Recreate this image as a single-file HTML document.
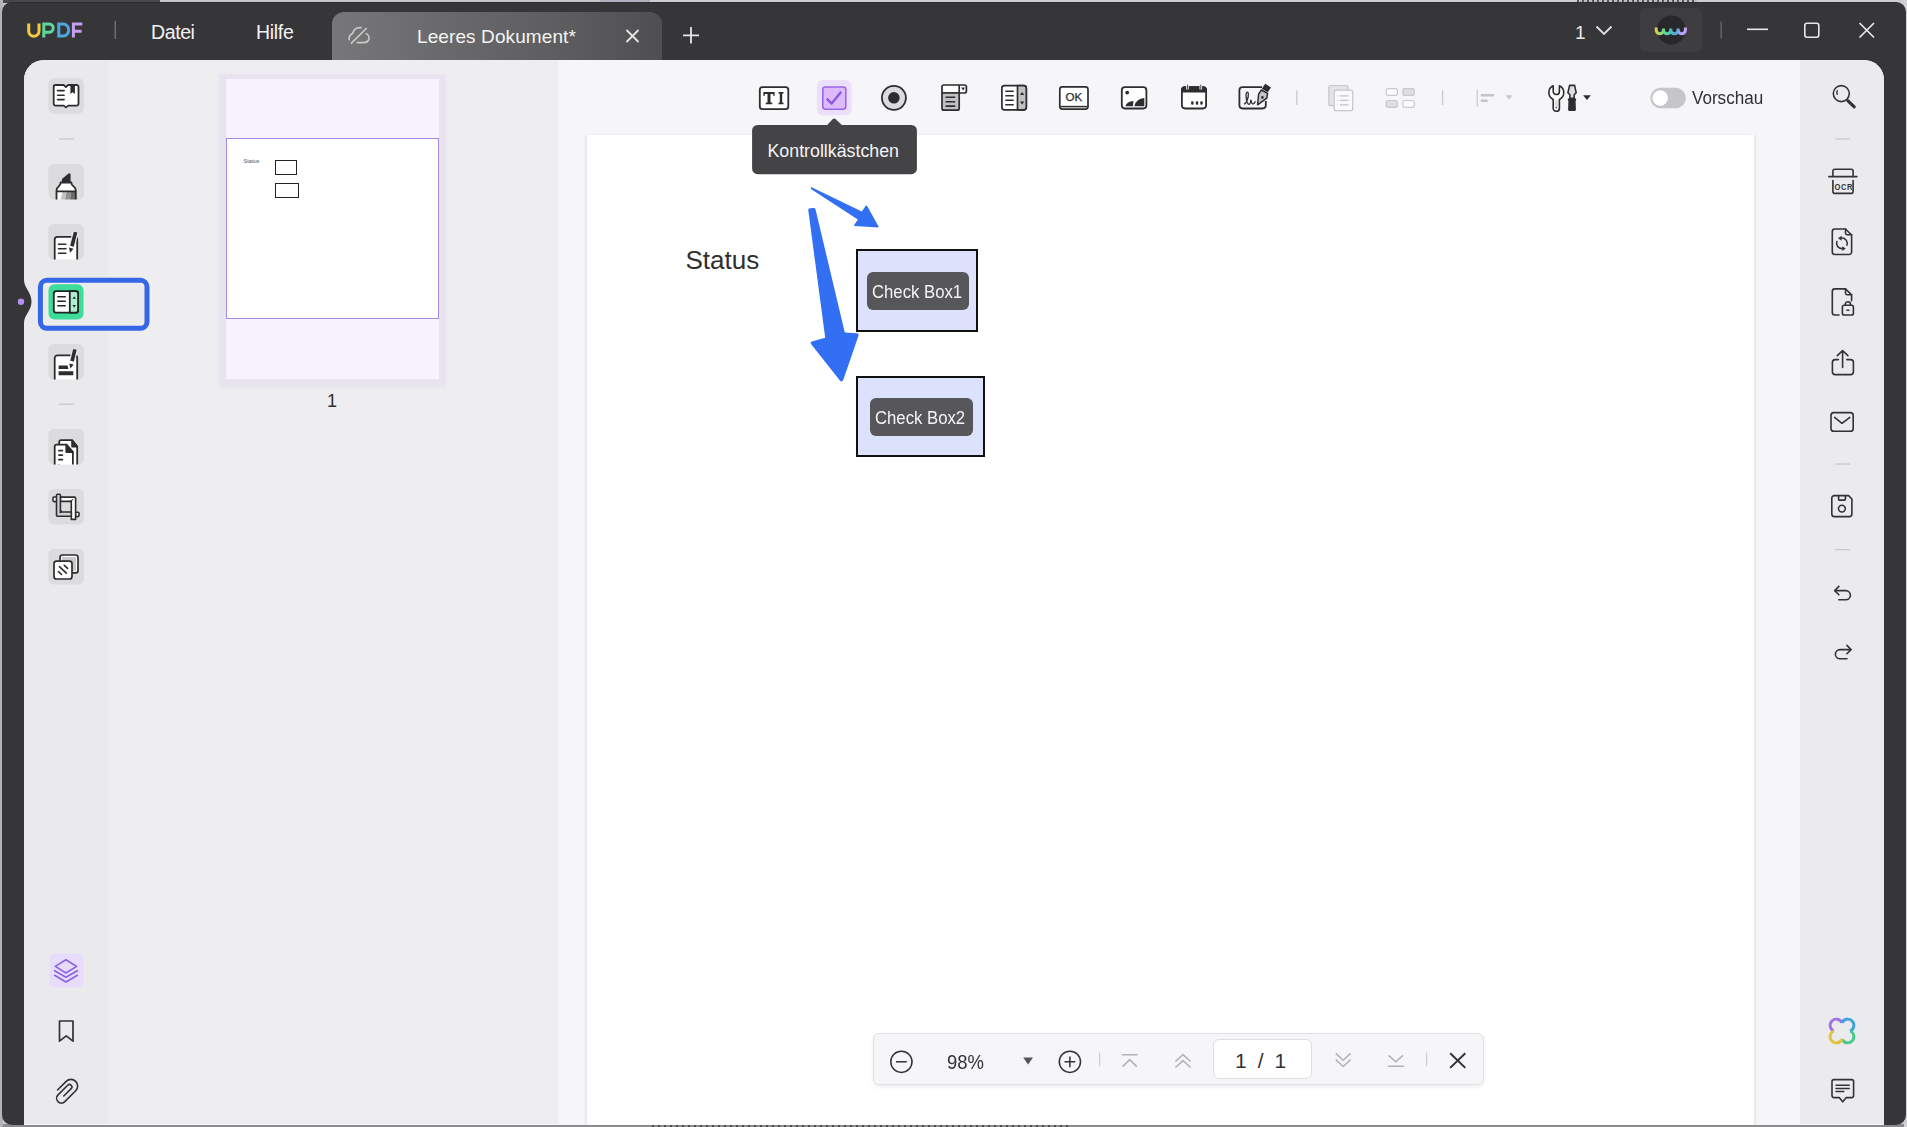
<!DOCTYPE html>
<html><head><meta charset="utf-8">
<style>
*{margin:0;padding:0;box-sizing:border-box}
html,body{width:1907px;height:1127px;overflow:hidden;background:#c9c7cf;font-family:"Liberation Sans",sans-serif}
.a{position:absolute}
#deskL{left:0;top:0;width:160px;height:3px;background:#474749}
#deskT{left:160px;top:0;width:1747px;height:3px;background:linear-gradient(90deg,#c4c4c6 0,#c4c4c6 440px,#b2aebe 440px,#b2aebe 490px,#cdcdcf 490px)}
#deskTx{left:1577px;top:0;width:120px;height:2px;background:repeating-linear-gradient(90deg,#555 0 2px,#bdbdbf 2px 5px)}
#deskB{left:0;top:1124px;width:1907px;height:3px;background:#8b8b8d}
#deskLe{left:0;top:0;width:3px;height:1127px;background:#b4b4b6}
#deskR{left:1904px;top:0;width:3px;height:1127px;background:#d2d2d4}
#win{left:2px;top:2px;width:1904px;height:1123px;background:#363538;border-radius:10px;border-top:1.5px solid #2f2d35}
#content{left:24px;top:60px;width:1860px;height:1065px;background:#f6f5f8;border-radius:20px 20px 0 0;overflow:hidden}
#lside{left:0;top:0;width:84px;height:1064px;background:#eaeaec}
#thumbs{left:84px;top:0;width:450px;height:1064px;background:#eeedf0}
#rside{left:1776px;top:0;width:84px;height:1064px;background:#ebeaec}
#page{left:563px;top:75px;width:1167px;height:1000px;background:#fff;box-shadow:-2px 0 2px rgba(0,0,0,0.06),2px 0 2px rgba(0,0,0,0.05)}
.t{position:absolute;white-space:nowrap;line-height:1}
</style></head><body>
<div id="deskL" class="a"></div><div id="deskT" class="a"></div><div id="deskB" class="a"></div><div id="deskLe" class="a"></div><div id="deskR" class="a"></div><div id="deskTx" class="a"></div>
<div id="win" class="a"></div>

<!-- title bar -->
<svg class="a" style="left:0;top:0" width="120" height="60">
  <g fill="none" stroke-width="3" stroke-linecap="butt">
    <path d="M28.7 23.4 V31 A5.15 5.15 0 0 0 39 31 V23.4" stroke="#f4cb3c"/>
    <path d="M43.8 37.4 V23.9 H49 A4.2 4.2 0 0 1 49 32.3 H43.8" stroke="#5bd79d"/>
    <path d="M58.8 23.9 V35.9 H63.2 A5.5 6 0 0 0 63.2 23.9 Z" stroke="#4aa8dd"/>
    <path d="M73.4 37.4 V23.9 H82.3 M73.4 31.2 H81.6" stroke="#c69ff4"/>
  </g>
  <rect x="114.5" y="21" width="1.5" height="18" fill="#6d6d70"/>
</svg>
<div class="t" style="left:151px;top:23px;font-size:19.5px;color:#f2f2f2;letter-spacing:-0.4px">Datei</div>
<div class="t" style="left:256px;top:23px;font-size:19.5px;color:#f2f2f2;letter-spacing:-0.3px">Hilfe</div>
<div class="a" style="left:332px;top:12px;width:330px;height:48px;border-radius:12px 12px 0 0;background:linear-gradient(90deg,#777779 0%,#6b6b6d 30%,#5d5d5f 70%,#4f4f51 100%)"></div>
<svg class="a" style="left:332px;top:12px" width="380" height="48">
  <g fill="none" stroke="#c9c9c9" stroke-width="1.7" stroke-linecap="round">
    <path d="M19.4 31.1 L34.3 16.5"/>
    <path d="M29 15.6 C25 15.2 21.6 17.5 20.5 21.5 C18.5 22.5 16.8 24.5 17.2 27.7"/>
    <path d="M34.3 21.8 C36.6 22.8 37.5 25.4 36.8 27.6 C36 29.4 34.5 30.6 32 30.6 H25.3"/>
  </g>
  <path d="M294.5 18 L306.5 30 M306.5 18 L294.5 30" stroke="#e6e6e6" stroke-width="1.8" fill="none"/>
  <path d="M359 15 V31.5 M351 23.3 H367" stroke="#e6e6e6" stroke-width="1.8" fill="none"/>
</svg>
<div class="t" style="left:417px;top:26.8px;font-size:19px;color:#f4f4f4;letter-spacing:0.1px">Leeres Dokument*</div>
<div class="t" style="left:1575px;top:23px;font-size:19px;color:#e8e8e8">1</div>
<svg class="a" style="left:1590px;top:0" width="317" height="60">
  <path d="M6.5 26.5 L14 34 L21.5 26.5" stroke="#e0e0e0" stroke-width="1.8" fill="none"/>
  <rect x="50" y="8" width="62" height="44" rx="6" fill="#3e3d40"/>
  <circle cx="81.3" cy="30" r="14.4" fill="#28272a"/>
  <defs><linearGradient id="wg" x1="64" x2="98" y1="0" y2="0" gradientUnits="userSpaceOnUse"><stop offset="0" stop-color="#f7c843"/><stop offset="0.33" stop-color="#55d994"/><stop offset="0.62" stop-color="#49a9dc"/><stop offset="0.8" stop-color="#b89cf6"/><stop offset="1" stop-color="#c7a2f5"/></linearGradient></defs>
  <path d="M66.2 27.5 V30 A3.65 3.65 0 0 0 73.5 30 V28.5 M73.5 30 A3.65 3.65 0 0 0 80.8 30 V28.5 M80.8 30 A3.65 3.65 0 0 0 88.1 30 V28.5 M88.1 30 A3.65 3.65 0 0 0 95.4 30 V27.5" stroke="url(#wg)" stroke-width="3" fill="none"/>
  <rect x="130.5" y="21.5" width="1.3" height="17" fill="#6a6a6c"/>
  <rect x="157" y="28.5" width="21" height="1.6" fill="#e8e8e8"/>
  <rect x="214.8" y="23.2" width="14" height="14" rx="2.2" stroke="#e8e8e8" stroke-width="1.6" fill="none"/>
  <path d="M269.5 23 L284 37.5 M284 23 L269.5 37.5" stroke="#e8e8e8" stroke-width="1.7" fill="none"/>
</svg>
<div id="content" class="a">
  <div id="lside" class="a"></div>
  <div id="thumbs" class="a"></div>
  <div id="page" class="a"></div>
  <div id="rside" class="a"></div>
</div>

<!-- left notch -->
<svg class="a" style="left:0;top:0" width="1907" height="1127">
  <path d="M24 280 C24 288 31.5 292 31.5 301.5 C31.5 311 24 315 24 323 Z" fill="#363538"/>
  <circle cx="21" cy="301.8" r="3.2" fill="#b58ff1"/>
  <!-- left sidebar icon backgrounds -->
  <g fill="#dcdcde">
    <rect x="48.3" y="78.3" width="35.7" height="35.4" rx="5.5"/>
    <rect x="48.3" y="164" width="35.7" height="35.5" rx="5.5"/>
    <rect x="48.3" y="224" width="35.7" height="35.5" rx="5.5"/>
    <rect x="48.3" y="344" width="35.7" height="35.5" rx="5.5"/>
    <rect x="48.3" y="429" width="35.7" height="35.5" rx="5.5"/>
    <rect x="48.3" y="489" width="35.7" height="35.5" rx="5.5"/>
    <rect x="48.3" y="549" width="35.7" height="35.5" rx="5.5"/>
  </g>
  <rect x="59" y="138.3" width="15" height="1.3" fill="#c9c9cc"/>
  <rect x="59" y="403.5" width="15" height="1.3" fill="#c9c9cc"/>
  <!-- selected -->
  <rect x="40.4" y="280.3" width="106.6" height="48" rx="6.5" fill="#ecebed" stroke="#3567e6" stroke-width="5"/>
  <rect x="48.5" y="284.3" width="35" height="35.2" rx="6" fill="#3ddc9a"/>
  <g stroke="#1f2622" stroke-width="1.8" stroke-linejoin="round">
    <rect x="53.8" y="291.1" width="24.3" height="21.6" rx="2.5" fill="#fff"/>
    <path d="M69.8 291.1 H75.6 A2.5 2.5 0 0 1 78.1 293.6 V310.2 A2.5 2.5 0 0 1 75.6 312.7 H69.8 Z" fill="#aeeecf"/>
  </g>
  <path d="M57.3 296.8 H65.8 M57.3 301.3 H65.8 M57.3 305.7 H65.8" stroke="#1f2622" stroke-width="1.5"/>
  <path d="M72.4 298.8 L74.2 296.4 L76 298.8 Z M72.4 305 L74.2 307.5 L76 305 Z" fill="#1f2622"/>
  <g fill="none" stroke="#2d2d2f" stroke-width="1.8" stroke-linejoin="round" stroke-linecap="round">
    <!-- book -->
    <path d="M55.5 85 H63.6 L65.9 87 L68.2 85 H76.7 A1.8 1.8 0 0 1 78.5 86.8 V103.8 A1.8 1.8 0 0 1 76.7 105.6 H68.2 L65.9 107.4 L63.6 105.6 H55.5 A1.8 1.8 0 0 1 53.7 103.8 V86.8 A1.8 1.8 0 0 1 55.5 85 Z" fill="#fff"/>
    <path d="M57.6 90.6 H64.1 M57.6 95.3 H64.1 M57.6 99.6 H64.1" stroke-width="1.6"/>
  </g>
  <path d="M70.4 85 H74.9 V94 L72.65 92.2 L70.4 94 Z" fill="#2d2d2f"/>
  <!-- highlighter -->
  <path d="M61.8 180.2 Q61.8 179 62.8 178.3 L68.6 173.6 Q70.6 172.6 70.6 175 V182.5 H61.8 Z" fill="#2d2d2f"/>
  <path d="M56.5 199.5 V190.5 Q56.5 188.6 58 187.2 L59.8 185 Q60.6 184 60.6 182.5 H71.4 Q71.4 184 72.2 185 L74.3 187.2 Q75.8 188.6 75.8 190.5 V199.5 Z" fill="#fff"/>
  <path d="M60.6 199.5 L62.5 192 H66.5 L65 199.5 Z" fill="#c4c4c4"/>
  <path d="M65 199.5 L66.5 192 H71 L70 199.5 Z" fill="#929292"/>
  <path d="M70 199.5 L71 192 H75.5 V199.5 Z" fill="#6a6a6a"/>
  <path d="M56.5 199.5 V190.5 Q56.5 188.6 58 187.2 L59.8 185 Q60.6 184 60.6 182.5 H71.4 Q71.4 184 72.2 185 L74.3 187.2 Q75.8 188.6 75.8 190.5 V199.5 M56.5 191.4 H75.8" fill="none" stroke="#2d2d2f" stroke-width="1.8" stroke-linejoin="round"/>
  <!-- edit doc -->
  <path d="M54.7 259.5 V239.5 A2.7 2.7 0 0 1 57.4 236.8 H74.5 A2.7 2.7 0 0 1 77.2 239.5 V259.5" fill="#fff" stroke="#2d2d2f" stroke-width="1.8"/>
  <path d="M58.5 244.3 H65.9 M58.5 248.7 H65.9 M58.5 253.2 H65.9" stroke="#2d2d2f" stroke-width="1.6" stroke-linecap="round"/>
  <path d="M75.6 232.1 L71.9 246.2" stroke="#eaeaec" stroke-width="6"/>
  <path d="M75.6 232.1 L71.9 246.2" stroke="#2d2d2f" stroke-width="3.6"/>
  <path d="M69 247.5 L73.5 248.7 L70 252.8 Z" fill="#2d2d2f"/>
  <!-- redact doc -->
  <path d="M54.7 379.5 V358 A2.7 2.7 0 0 1 57.4 355.3 H74.5 A2.7 2.7 0 0 1 77.2 358 V379.5" fill="#fff" stroke="#2d2d2f" stroke-width="1.8"/>
  <path d="M74.9 349.4 L72.1 361.1" stroke="#eaeaec" stroke-width="6"/>
  <path d="M74.9 349.4 L72.1 361.1" stroke="#2d2d2f" stroke-width="3.6"/>
  <path d="M69.2 363.4 L73.7 364.4 L70.4 368.5 Z" fill="#2d2d2f"/>
  <path d="M58.6 365.4 H67.6 L68.4 368.9 H58.6 Z M58.6 371.3 H73.3 V375.2 H58.6 Z" fill="#2d2d2f"/>
  <!-- organize pages -->
  <g stroke="#2d2d2f" stroke-width="1.8" stroke-linejoin="round">
    <path d="M59.2 464.5 V441.9 A1.7 1.7 0 0 1 60.9 440.2 H72.1 L77.2 446.5 V464.5" fill="#fff"/>
    <path d="M72.1 440.2 V446.5 H77.2 Z" fill="#2d2d2f"/>
    <path d="M54.7 464.5 V446.4 A1.7 1.7 0 0 1 56.4 444.7 H66.3 L72.9 452.1 V464.5" fill="#fff"/>
    <path d="M66.3 444.7 V452.1 H72.9 Z" fill="#2d2d2f"/>
  </g>
  <path d="M58.8 450.6 H62.5 M58.8 455.1 H62.5 M58.8 459.6 H62.5" stroke="#2d2d2f" stroke-width="1.6" stroke-linecap="round"/>
  <!-- crop -->
  <g stroke="#2d2d2f" stroke-width="1.6" stroke-linejoin="round">
    <rect x="53" y="497" width="4" height="4.6" rx="1" fill="#fff"/>
    <rect x="75.4" y="512.2" width="3.6" height="4.4" rx="1" fill="#fff"/>
    <path d="M60.4 497.1 H74.6 A1 1 0 0 1 75.6 498.1 V519.4 H71.3 V501.4 H60.4 Z" fill="#fff"/>
    <path d="M57.5 494.2 H59.4 A1 1 0 0 1 60.4 495.2 V512 H71.3 V516.3 H57.5 A1 1 0 0 1 56.5 515.3 V495.2 A1 1 0 0 1 57.5 494.2 Z" fill="#d2d2d4"/>
  </g>
  <path d="M59.8 513 L62 510.7 M70 501.9 L72.9 499.4" stroke="#2d2d2f" stroke-width="1.2"/>
  <!-- compress -->
  <g stroke="#2d2d2f" stroke-width="1.7">
    <rect x="60" y="555" width="18" height="17.9" rx="2.5" fill="#fff"/>
    <rect x="62" y="557" width="14" height="13.9" fill="#c9c9cb" stroke="none"/>
    <rect x="54" y="561.2" width="18" height="17.8" rx="2.5" fill="#fff"/>
  </g>
  <path d="M59.4 566.7 L66.3 573.1 M64.3 565.3 L67.6 568.4 M58.5 571.6 L61.6 574.5" stroke="#2d2d2f" stroke-width="1.6" stroke-linecap="round"/>
  <!-- layers -->
  <rect x="49.5" y="953.5" width="34" height="34" rx="5.5" fill="#e7dcfb"/>
  <g fill="none" stroke="#8b62e2" stroke-width="1.6" stroke-linejoin="round" stroke-linecap="round">
    <path d="M65.9 959.7 L76.6 966.4 L65.9 973 L55.3 966.4 Z"/>
    <path d="M54.6 970.7 L65.9 977.3 L77.4 970.7 M54.6 975.3 L65.9 982 L77.4 975.3"/>
  </g>
  <!-- bookmark -->
  <path d="M59.5 1021 H73 V1041.2 L66.2 1035.8 L59.5 1041.2 Z" fill="none" stroke="#333335" stroke-width="1.7" stroke-linejoin="round"/>
  <!-- paperclip -->
  <g transform="translate(66.5 1091.5) rotate(45)">
    <path d="M-7.4 5.3 V-7 A6.7 6.7 0 0 1 6 -7 V8.4 A4.8 4.8 0 0 1 -3.6 8.4 V-5.3 A2.45 2.45 0 0 1 1.3 -5.3 V5.1" fill="none" stroke="#333335" stroke-width="1.6" stroke-linecap="round"/>
  </g>
</svg>

<!-- thumbnail -->
<div class="a" style="left:219px;top:74px;width:227px;height:314px;background:#e7e3ef;border-radius:3px;filter:blur(0.8px)"></div>
<div class="a" style="left:226.4px;top:78.7px;width:212.3px;height:300.5px;background:#f8f2fc"></div>
<div class="a" style="left:226px;top:138.3px;width:213px;height:180.6px;background:#fff;border:1.2px solid #a58be2"></div>
<div class="t" style="left:243.5px;top:159.3px;font-size:5.6px;color:#555">Status</div>
<div class="a" style="left:274.6px;top:160.2px;width:22.8px;height:15px;border:1.2px solid #222"></div>
<div class="a" style="left:274.6px;top:183.2px;width:24.2px;height:14.6px;border:1.2px solid #222"></div>
<div class="t" style="left:327px;top:392px;font-size:18px;color:#2f2f31">1</div>

<!-- toolbar -->
<svg class="a" style="left:0;top:0" width="1907" height="1127">
  <!-- TI -->
  <rect x="759.8" y="87.1" width="28.5" height="22" rx="2.6" fill="#fff" stroke="#2d2d2f" stroke-width="1.8"/>
  <path d="M763.4 92 H774.6 V96 H773.6 L773 93.9 H770.5 V102.4 L772.3 102.7 V104.2 H765.7 V102.7 L767.5 102.4 V93.9 H765 L764.4 96 H763.4 Z M778.5 92 H783.5 V93.5 L782.2 93.8 V102.4 L783.5 102.7 V104.2 H778.5 V102.7 L779.8 102.4 V93.8 L778.5 93.5 Z" fill="#2d2d2f"/>
  <!-- checkbox -->
  <rect x="816.8" y="80" width="34.8" height="35.2" rx="6" fill="#ecdffc"/>
  <rect x="822.8" y="87" width="23" height="22.2" rx="2.6" fill="#dcbafb" stroke="#9b67e9" stroke-width="1.6"/>
  <path d="M826.8 98.6 L831.6 103.6 L841.2 91.8" fill="none" stroke="#8e56e6" stroke-width="2.4" stroke-linejoin="round"/>
  <!-- radio -->
  <circle cx="893.9" cy="97.8" r="12" fill="#dcdcde" stroke="#2d2d2f" stroke-width="1.8"/>
  <circle cx="893.9" cy="97.8" r="5.8" fill="#2d2d2f"/>
  <!-- combo -->
  <g stroke="#2d2d2f" stroke-width="1.7" stroke-linejoin="round">
    <path d="M942 93 V86.8 A1.8 1.8 0 0 1 943.8 85 H964.4 A2 2 0 0 1 966.4 87 V91 A2 2 0 0 1 964.4 93 Z" fill="#fff"/>
    <path d="M942 93 H959.2 V108.2 A2 2 0 0 1 957.2 110.2 H944 A2 2 0 0 1 942 108.2 Z" fill="#c1c1c3"/>
    <path d="M959.2 85 V93" fill="none"/>
  </g>
  <path d="M961.2 87.6 H965 L963.1 90.6 Z" fill="#2d2d2f"/>
  <path d="M945.5 97.3 H955.2 M945.5 101.7 H955.2 M945.5 106.1 H955.2" stroke="#2d2d2f" stroke-width="1.6"/>
  <!-- listbox -->
  <g stroke="#2d2d2f" stroke-width="1.7" stroke-linejoin="round">
    <rect x="1001.9" y="85.7" width="24.4" height="24.2" rx="2.6" fill="#fff"/>
    <path d="M1017.5 85.7 H1023.7 A2.6 2.6 0 0 1 1026.3 88.3 V107.3 A2.6 2.6 0 0 1 1023.7 109.9 H1017.5 Z" fill="#c1c1c3"/>
  </g>
  <path d="M1005.3 91.2 H1013.7 M1005.3 95.7 H1013.7 M1005.3 100.2 H1013.7 M1005.3 104.8 H1013.7" stroke="#2d2d2f" stroke-width="1.5"/>
  <path d="M1019.9 95 L1022.1 92 L1024.3 95 Z M1019.9 101.4 L1022.1 104.4 L1024.3 101.4 Z" fill="#2d2d2f"/>
  <!-- OK -->
  <rect x="1059.8" y="86.8" width="28.2" height="22.3" rx="2.6" fill="#fff" stroke="#2d2d2f" stroke-width="1.7"/>
  <path d="M1060.5 106.6 H1087.3" stroke="#2d2d2f" stroke-width="1.5"/>
  <text x="1065.6" y="100.8" font-family="Liberation Sans" font-size="11.6" fill="#2d2d2f" stroke="#2d2d2f" stroke-width="0.25">OK</text>
  <!-- image -->
  <rect x="1121.8" y="87.1" width="24.6" height="21.4" rx="3.2" fill="#fff" stroke="#2d2d2f" stroke-width="1.8"/>
  <circle cx="1127.2" cy="92.6" r="1.9" fill="#2d2d2f"/>
  <path d="M1125.3 106.3 Q1127 101.6 1133.5 101.1 L1132.9 106.3 Z M1134.3 106.3 Q1136 98.8 1144.3 98.1 V106.3 Z" fill="#2d2d2f"/>
  <!-- calendar -->
  <rect x="1181.9" y="87.1" width="24.2" height="21.4" rx="3.2" fill="#fff" stroke="#2d2d2f" stroke-width="1.8"/>
  <path d="M1181.9 91.6 V90.3 A3.2 3.2 0 0 1 1185.1 87.1 H1202.9 A3.2 3.2 0 0 1 1206.1 90.3 V91.6 Z" fill="#2d2d2f" stroke="#2d2d2f" stroke-width="1.8"/>
  <path d="M1187.4 84.4 V89.6 M1200.8 84.4 V89.6" stroke="#fff" stroke-width="2.6"/>
  <path d="M1187.4 84.6 V89.4 M1200.8 84.6 V89.4" stroke="#2d2d2f" stroke-width="0.9"/>
  <rect x="1191.1" y="101.2" width="2.4" height="3.6" rx="1" fill="#2d2d2f"/>
  <rect x="1195.8" y="101.2" width="2.4" height="3.6" rx="1" fill="#2d2d2f"/>
  <rect x="1200.3" y="101.2" width="2.4" height="3.6" rx="1" fill="#2d2d2f"/>
  <!-- signature -->
  <path d="M1262 87.1 H1242.6 A3.2 3.2 0 0 0 1239.4 90.3 V105.3 A3.2 3.2 0 0 0 1242.6 108.5 H1262.6 A3.2 3.2 0 0 0 1265.8 105.3 V101" fill="none" stroke="#2d2d2f" stroke-width="1.8"/>
  <path d="M1244 104.2 C1247 103.5 1248.6 97 1248.3 93.5 C1248 91 1245.8 92 1246 96 C1246.3 100 1247.5 104 1249 104.4 C1250.3 104.6 1250.8 100.5 1251 99.8 C1251.2 102.5 1252 104.3 1253.5 103.8 C1254.5 103.4 1255 101.5 1255.5 101.2" fill="none" stroke="#2d2d2f" stroke-width="1.3"/>
  <path d="M1265.2 83.8 L1271 87.4 L1267.8 92.2 L1261.8 88.8 Z" fill="#2d2d2f"/>
  <path d="M1261.4 90 L1267.6 93.4 L1266.8 98.2 L1257.6 104.8 L1258.6 94.2 Z" fill="#c4c4c6" stroke="#2d2d2f" stroke-width="1.5" stroke-linejoin="round"/>
  <circle cx="1262.4" cy="97.4" r="1.3" fill="#2d2d2f"/>
  <!-- separators -->
  <rect x="1296.2" y="90.3" width="1.3" height="14.6" fill="#c9c8cd"/>
  <rect x="1441.9" y="90.3" width="1.3" height="14.6" fill="#c9c8cd"/>
  <!-- copy list disabled -->
  <rect x="1328.8" y="85.5" width="19.3" height="20.2" rx="2" fill="#e4e3e8" stroke="#c7c6cb" stroke-width="1.2"/>
  <rect x="1334.2" y="90.2" width="18.5" height="20.5" rx="2" fill="#fafafc" stroke="#c7c6cb" stroke-width="1.2"/>
  <path d="M1340 95.8 H1348.5 M1340 100.4 H1348.5 M1340 104.8 H1348.5" stroke="#c2c1c6" stroke-width="1.3"/>
  <path d="M1337.3 95.8 H1338 M1337.3 100.4 H1338 M1337.3 104.8 H1338" stroke="#c2c1c6" stroke-width="1.3"/>
  <!-- grid disabled -->
  <g stroke="#c9c8cd" stroke-width="1.2">
    <rect x="1386.2" y="88.6" width="11.2" height="6.8" rx="2" fill="#fcfcfd"/>
    <rect x="1402.8" y="88.6" width="11.5" height="6.8" rx="2" fill="#dedde2"/>
    <rect x="1386.2" y="100.5" width="11.2" height="6.8" rx="2" fill="#dedde2"/>
    <rect x="1402.8" y="100.5" width="11.5" height="6.8" rx="2" fill="#fcfcfd"/>
  </g>
  <!-- align disabled -->
  <rect x="1476.6" y="89.8" width="1.4" height="17.1" fill="#d0cfd4"/>
  <path d="M1480.8 95.2 H1494 M1480.8 100.7 H1487.6" stroke="#c6c5ca" stroke-width="2.4"/>
  <path d="M1505.4 95.2 H1512.8 L1509.1 99.6 Z" fill="#cacace"/>
  <!-- tools -->
  <path d="M1553.2 85.8 A7.5 7.5 0 0 0 1553.2 99.4 V108.2 A3.1 3.1 0 0 0 1559.4 108.2 V99.4 A7.5 7.5 0 0 0 1559.4 85.8 V91.4 A3.1 3.1 0 0 1 1553.2 91.4 Z" fill="#fff" stroke="#2d2d2f" stroke-width="1.6" stroke-linejoin="round"/>
  <path d="M1554.6 100.4 H1558 V107.5 H1554.6 Z" fill="#dedee0"/>
  <circle cx="1556.3" cy="107.8" r="0.7" fill="#2d2d2f"/>
  <path d="M1569.6 85.4 H1574.6 L1576.2 92.8 L1574.2 94.8 V98.4 H1569.9 V94.8 L1567.9 92.8 Z" fill="#dedee0" stroke="#2d2d2f" stroke-width="1.6" stroke-linejoin="round"/>
  <path d="M1567.9 98.4 H1576.1 V100.3 L1575.6 101 L1575.9 109.5 Q1575.9 111 1574.4 111 H1569.6 Q1568.1 111 1568.1 109.5 L1568.4 101 L1567.9 100.3 Z" fill="#2d2d2f"/>
  <path d="M1583.1 95.3 H1590.8 L1587 100.1 Z" fill="#2d2d2f"/>
  <!-- toggle -->
  <rect x="1650.3" y="87.7" width="35.6" height="20.6" rx="10.3" fill="#c6c5c9"/>
  <circle cx="1660.2" cy="98" r="7.7" fill="#fff"/>
</svg>
<div class="t" style="left:1692px;top:89px;font-size:18px;color:#303032;transform:scaleX(0.948);transform-origin:0 0">Vorschau</div>

<!-- page content -->
<div class="t" style="left:685.5px;top:247.3px;font-size:26px;color:#2f2f2f">Status</div>
<div class="a" style="left:856.4px;top:249px;width:121.6px;height:82.6px;background:#dde2fc;border:2.2px solid #111"></div>
<div class="a" style="left:867px;top:272px;width:101.8px;height:37.7px;background:#57575b;border-radius:6px"></div>
<div class="t" style="left:872.3px;top:283.5px;font-size:17.6px;color:#f4f4f4;transform:scaleX(0.95);transform-origin:0 0">Check Box1</div>
<div class="a" style="left:856.4px;top:376.3px;width:128.9px;height:81.2px;background:#dde2fc;border:2.2px solid #111"></div>
<div class="a" style="left:869.5px;top:398px;width:103.2px;height:37.6px;background:#57575b;border-radius:6px"></div>
<div class="t" style="left:875.3px;top:409.8px;font-size:17.6px;color:#f4f4f4;transform:scaleX(0.95);transform-origin:0 0">Check Box2</div>
<svg class="a" style="left:0;top:0" width="1907" height="1127">
  <path d="M811.1 187.1 L861.8 211.5 L865.7 205.8 Q866.5 205 867.2 206 L878.7 226.8 Q878.8 227.6 878 227.6 L854.6 226 Q853.6 225.6 854.2 224.9 L857.8 219.6 L811.3 189.2 Q810.3 188 811.1 187.1 Z" fill="#336ff2"/>
  <path d="M808.3 210.2 Q808 208.4 809.8 208.2 L813.6 207.9 Q815.2 207.8 815.5 209.3 L844.8 332.4 L856.6 333.2 Q859.2 333.6 858.4 336 L843.4 379.6 Q841.5 383.5 839.3 379.8 L811.2 344.2 Q809.6 341.6 812.6 341.2 L825.2 337.8 Z" fill="#336ff2"/>
</svg>
<!-- tooltip -->
<svg class="a" style="left:0;top:0" width="1907" height="1127">
  <path d="M757.6 124.9 H827.2 L832.6 119.3 Q834.2 117.8 835.8 119.3 L841.8 124.9 H911.4 A5.5 5.5 0 0 1 916.9 130.4 V168.7 A5.5 5.5 0 0 1 911.4 174.2 H757.6 A5.5 5.5 0 0 1 752.1 168.7 V130.4 A5.5 5.5 0 0 1 757.6 124.9 Z" fill="#444346"/>
</svg>
<div class="t" style="left:767.5px;top:143px;font-size:17.8px;color:#f5f5f5">Kontrollkästchen</div>

<!-- right sidebar icons -->
<svg class="a" style="left:0;top:0" width="1907" height="1127">
  <g fill="none" stroke="#333335" stroke-width="1.6" stroke-linecap="round" stroke-linejoin="round">
    <circle cx="1841.3" cy="93.6" r="8"/>
    <path d="M1837.2 90.6 Q1836.6 92.6 1837.2 94.4" stroke-width="1.4"/>
  </g>
  <path d="M1847.8 100.6 L1854.2 106.8" stroke="#333335" stroke-width="3.2" stroke-linecap="round"/>
  <rect x="1835.2" y="138.3" width="14.8" height="1.3" fill="#c9c9cc"/>
  <rect x="1835.2" y="463.4" width="14.8" height="1.3" fill="#c9c9cc"/>
  <rect x="1835.2" y="549" width="14.8" height="1.3" fill="#c9c9cc"/>
  <g fill="none" stroke="#333335" stroke-width="1.6" stroke-linecap="round" stroke-linejoin="round">
    <!-- OCR -->
    <path d="M1832.9 176.5 V171.2 A2 2 0 0 1 1834.9 169.2 H1851.1 A2 2 0 0 1 1853.1 171.2 V176.5"/>
    <path d="M1828.8 176.6 H1856.9"/>
    <path d="M1832.9 180.5 V191.4 A2 2 0 0 0 1834.9 193.4 H1851.1 A2 2 0 0 0 1853.1 191.4 V180.5"/>
    <!-- convert -->
    <path d="M1845.5 229 H1834.8 A2.5 2.5 0 0 0 1832.3 231.5 V252 A2.5 2.5 0 0 0 1834.8 254.5 H1849.1 A2.5 2.5 0 0 0 1851.6 252 V235 Z"/>
    <path d="M1845.5 229 V233 A1.8 1.8 0 0 0 1847.3 234.8 H1851.6"/>
    <path d="M1841.6 238 A5.3 5.3 0 0 1 1846.9 245.1 M1836.9 241.5 A5.3 5.3 0 0 0 1842.2 248.6"/>
    <!-- lock doc -->
    <path d="M1839 315 H1834.8 A2.5 2.5 0 0 1 1832.3 312.5 V291.4 A2.5 2.5 0 0 1 1834.8 288.9 H1845.5 L1851.6 294.8 V300.7"/>
    <path d="M1845.5 289 V293 A1.8 1.8 0 0 0 1847.3 294.8 H1851.6"/>
    <rect x="1842.4" y="305.3" width="11" height="9.7" rx="1.8"/>
    <path d="M1845.3 305.2 V304.3 A2.6 2.6 0 0 1 1850.5 304.3 V305.2"/>
    <path d="M1846.9 310.2 H1848.9" stroke-width="1.4"/>
    <!-- share -->
    <path d="M1838.4 359.6 H1835.2 A2.8 2.8 0 0 0 1832.4 362.4 V371.8 A2.8 2.8 0 0 0 1835.2 374.6 H1850.6 A2.8 2.8 0 0 0 1853.4 371.8 V362.4 A2.8 2.8 0 0 0 1850.6 359.6 H1846.8"/>
    <path d="M1842.6 351 V367.5 M1837.3 355.6 L1842.6 350.6 L1847.9 355.6"/>
    <!-- mail -->
    <rect x="1831" y="412.6" width="22.2" height="18.6" rx="2.8"/>
    <path d="M1834.6 417.4 L1842 423.3 L1849.8 417.4"/>
    <!-- save -->
    <path d="M1834.4 495.6 H1848.6 L1851.9 499 V514 A2.6 2.6 0 0 1 1849.3 516.6 H1834.4 A2.6 2.6 0 0 1 1831.8 514 V498.2 A2.6 2.6 0 0 1 1834.4 495.6 Z"/>
    <path d="M1838.6 495.8 V499.3 A0.8 0.8 0 0 0 1839.4 500.1 H1844.6 A0.8 0.8 0 0 0 1845.4 499.3 V495.8"/>
    <circle cx="1841.9" cy="508.6" r="3.4"/>
    <!-- undo -->
    <path d="M1835 590.6 H1845.8 A4.6 4.6 0 0 1 1845.8 599.8 H1838.8"/>
    <path d="M1838.9 586.4 L1834.7 590.6 L1838.9 594.8"/>
    <!-- redo -->
    <path d="M1850.8 649.6 H1840 A4.6 4.6 0 0 0 1840 658.8 H1847"/>
    <path d="M1846.9 645.4 L1851.1 649.6 L1846.9 653.8"/>
    <!-- comment -->
    <path d="M1834 1079.6 H1851.6 A2 2 0 0 1 1853.6 1081.6 V1095.6 A2 2 0 0 1 1851.6 1097.6 H1846.3 L1842.7 1101.8 L1839.2 1097.6 H1834 A2 2 0 0 1 1832 1095.6 V1081.6 A2 2 0 0 1 1834 1079.6 Z"/>
    <path d="M1836 1085.3 H1849.2 M1836 1088.4 H1849.2 M1836 1091.5 H1843.8" stroke-width="1.5"/>
  </g>
  <path d="M1838 238.2 L1841.6 235.7 L1841.6 240.8 Z M1845.8 248.6 L1842.2 246.2 L1842.2 251 Z" fill="#333335"/>
  <text x="0" y="0" font-family="Liberation Sans" font-weight="bold" font-size="9.2" fill="#333335" letter-spacing="0.7" transform="translate(1834.6 189.5) scale(0.82 1.02)">OCR</text>
  <!-- AI icon -->
  <defs>
    <linearGradient id="ai1" x1="1829" y1="1018" x2="1855" y2="1044" gradientUnits="userSpaceOnUse">
      <stop offset="0" stop-color="#9b6cf2"/><stop offset="0.5" stop-color="#58a8e8"/><stop offset="1" stop-color="#3fd08e"/>
    </linearGradient>
    <linearGradient id="ai2" x1="1829" y1="1044" x2="1855" y2="1018" gradientUnits="userSpaceOnUse">
      <stop offset="0" stop-color="#f5c93a"/><stop offset="0.45" stop-color="#8ad07a"/><stop offset="1" stop-color="#2fb6f0"/>
    </linearGradient>
  </defs>
  <g fill="none" stroke-width="2.9" stroke-linecap="butt">
    <path d="M1833.86 1031 A6.2 6.2 0 1 1 1842 1022.86" stroke="#9f74ea"/>
    <path d="M1842 1022.86 A6.2 6.2 0 1 1 1850.14 1031" stroke="#3ea3dc"/>
    <path d="M1850.14 1031 A6.2 6.2 0 1 1 1842 1039.14" stroke="#46c98e"/>
    <path d="M1842 1039.14 A6.2 6.2 0 1 1 1833.86 1031" stroke="#e3c23e"/>
  </g>
</svg>

<!-- zoom bar -->
<div class="a" style="left:873px;top:1033.3px;width:611.3px;height:51.7px;background:#f6f5f8;border:1px solid #e2e1e6;border-radius:6px;box-shadow:0 2px 4px rgba(0,0,0,0.08)"></div>
<div class="a" style="left:1213.3px;top:1039.4px;width:99.1px;height:40.1px;background:#fff;border:1px solid #dedde2;border-radius:6px"></div>
<svg class="a" style="left:0;top:0" width="1907" height="1127">
  <g fill="none" stroke="#333335" stroke-width="1.5">
    <circle cx="901.4" cy="1061.8" r="10.6"/>
    <path d="M896 1061.8 H906.8"/>
    <circle cx="1069.9" cy="1061.8" r="10.6"/>
    <path d="M1064.5 1061.8 H1075.3 M1069.9 1056.4 V1067.2"/>
  </g>
  <path d="M1023.2 1057.5 H1033 L1028.1 1064.6 Z" fill="#555557"/>
  <rect x="1099" y="1052.6" width="1.2" height="13.7" fill="#cfced3"/>
  <rect x="1426" y="1052.6" width="1.2" height="13.7" fill="#cfced3"/>
  <g fill="none" stroke="#b2b1b6" stroke-width="1.5">
    <path d="M1121.8 1054.8 H1137.7 M1122.6 1066.6 L1129.7 1059.6 L1136.8 1066.6"/>
    <path d="M1175.4 1061.5 L1183 1054.6 L1190.6 1061.5 M1175.4 1067.5 L1183 1060.6 L1190.6 1067.5"/>
    <path d="M1335.8 1053.4 L1343.2 1060.3 L1350.6 1053.4 M1335.8 1059.6 L1343.2 1066.5 L1350.6 1059.6"/>
    <path d="M1388.6 1055.4 L1395.8 1061.8 L1403 1055.4 M1387.9 1066.3 H1403.8"/>
  </g>
  <path d="M1450.2 1053.2 L1465.3 1067.9 M1465.3 1053.2 L1450.2 1067.9" stroke="#333335" stroke-width="2"/>
</svg>
<div class="t" style="left:946.5px;top:1051px;font-size:21px;color:#333335;transform:scaleX(0.88);transform-origin:0 0">98%</div>
<div class="t" style="left:1235px;top:1049.5px;font-size:21px;color:#333335;letter-spacing:2.6px">1 / 1</div>
<div class="a" style="left:652px;top:1125px;width:420px;height:2px;background:repeating-linear-gradient(90deg,#4a4a4c 0 2px,#8b8b8d 2px 6px)"></div>
</body></html>
